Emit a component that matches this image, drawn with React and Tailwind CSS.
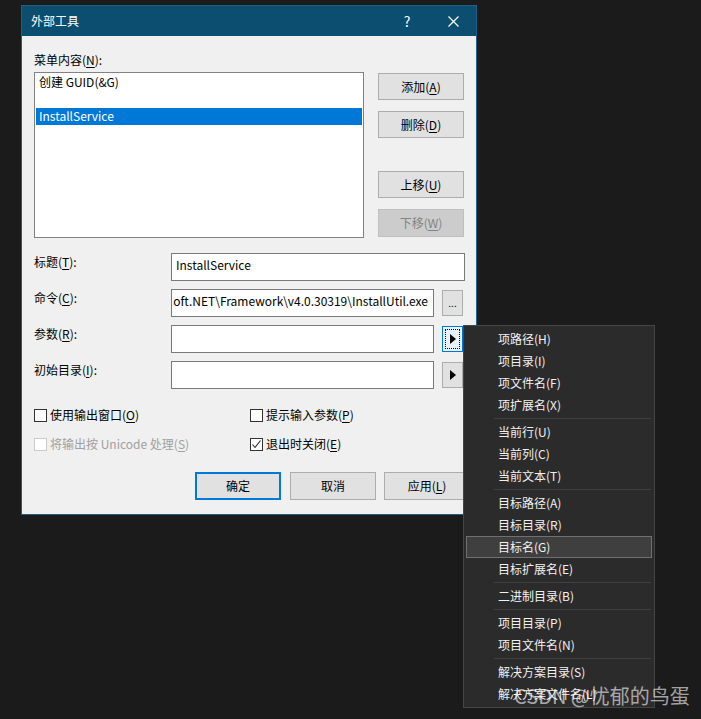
import React from "react";

const U = ({ children }) => <span className="underline underline-offset-[2px]">{children}</span>;

const Btn = ({ children, className = "" }) => (
  <div
    className={`flex items-center justify-center w-[86px] h-[27px] border border-[#adadad] bg-[#e1e1e1] text-[12px] leading-[16px] text-black ${className}`}
  >
    {children}
  </div>
);

const Arrow = () => (
  <svg width="6" height="10" viewBox="0 0 6 10">
    <path d="M0 0 L6 5 L0 10 Z" fill="#000" />
  </svg>
);

const Check = ({ checked, disabled, label }) => (
  <div className="flex items-center h-[16px]">
    <div
      className={`flex items-center justify-center w-[13px] h-[13px] border bg-white ${
        disabled ? "border-[#cccccc]" : "border-[#333333]"
      }`}
    >
      {checked && (
        <svg width="11" height="11" viewBox="0 0 11 11">
          <path d="M1.5 5.5 L4 8.5 L9.5 1.5" fill="none" stroke="#222" strokeWidth="1.1" />
        </svg>
      )}
    </div>
    <span className={`ml-[3px] text-[12px] leading-[16px] ${disabled ? "text-[#a0a0a0]" : "text-black"}`}>
      {label}
    </span>
  </div>
);

const FieldLabel = ({ children }) => (
  <div className="w-[137px] pt-[1px] text-[12px] leading-[16px] text-black">{children}</div>
);

const menuGroups = [
  ["项路径(H)", "项目录(I)", "项文件名(F)", "项扩展名(X)"],
  ["当前行(U)", "当前列(C)", "当前文本(T)"],
  ["目标路径(A)", "目标目录(R)", "目标名(G)", "目标扩展名(E)"],
  ["二进制目录(B)"],
  ["项目目录(P)", "项目文件名(N)"],
  ["解决方案目录(S)", "解决方案文件名(L)"],
];

export default function App() {
  return (
    <div className="relative w-[701px] h-[719px] overflow-hidden bg-[#1b1b1b] pt-[5px] pl-[21px] font-['Noto_Sans_CJK_SC',sans-serif]">
      {/* dialog */}
      <div className="w-[456px] h-[510px] border border-[#1e5f85] bg-[#f0f0f0] flex flex-col">
        {/* title bar */}
        <div className="flex items-center h-[30px] bg-[#0b4e70] text-white">
          <div className="flex-1 pl-[9px] text-[12px] leading-[16px]">外部工具</div>
          <div className="w-[46px] text-center text-[14px] leading-[16px]">?</div>
          <div className="w-[46px] flex items-center justify-center">
            <svg width="11" height="11" viewBox="0 0 11 11">
              <path d="M0.5 0.5 L10.5 10.5 M10.5 0.5 L0.5 10.5" stroke="#fff" strokeWidth="1.2" />
            </svg>
          </div>
        </div>

        {/* body */}
        <div className="pl-[12px] pt-[16px] flex flex-col">
          <div className="text-[12px] leading-[16px] text-black">
            菜单内容(<U>N</U>):
          </div>

          <div className="flex mt-[4px] gap-[14px]">
            <div className="w-[330px] h-[166px] border border-[#828282] bg-white p-[1px] text-[12px]">
              <div className="h-[17px] leading-[16px] pl-[3px] text-black">创建 GUID(&amp;G)</div>
              <div className="h-[17px]" />
              <div className="h-[17px] leading-[16px] pl-[3px] bg-[#0078d7] text-white">InstallService</div>
            </div>
            <div className="flex flex-col pt-[1px]">
              <Btn>
                添加(<U>A</U>)
              </Btn>
              <Btn className="mt-[11px]">
                删除(<U>D</U>)
              </Btn>
              <Btn className="mt-[33px]">
                上移(<U>U</U>)
              </Btn>
              <Btn className="mt-[11px] h-[28px] !bg-[#cccccc] !border-[#bfbfbf] !text-[#838383]">
                下移(<U>W</U>)
              </Btn>
            </div>
          </div>

          {/* fields */}
          <div className="flex flex-col gap-[8px] mt-[15px]">
            <div className="flex">
              <FieldLabel>
                标题(<U>T</U>):
              </FieldLabel>
              <div className="w-[294px] h-[28px] border border-[#7a7a7a] bg-white px-[4px] pt-[1px] text-[12px] leading-[20px] text-black">
                InstallService
              </div>
            </div>
            <div className="flex">
              <FieldLabel>
                命令(<U>C</U>):
              </FieldLabel>
              <div className="w-[263px] h-[28px] border border-[#7a7a7a] bg-white pr-[5px] pt-[1px] flex justify-end overflow-hidden whitespace-nowrap text-[12px] leading-[20px] text-black">
                oft.NET\Framework\v4.0.30319\InstallUtil.exe
              </div>
              <div className="ml-[8px] mt-[1px] w-[21px] h-[26px] border border-[#adadad] bg-[#e1e1e1] flex items-end justify-center pb-[7px] text-[10px] leading-[10px] text-black">
                ...
              </div>
            </div>
            <div className="flex">
              <FieldLabel>
                参数(<U>R</U>):
              </FieldLabel>
              <div className="w-[263px] h-[28px] border border-[#7a7a7a] bg-white" />
              <div className="ml-[8px] mt-[1px] w-[21px] h-[26px] border border-[#0078d7] bg-[#e5f1fb] p-[2px]">
                <div className="w-full h-full border border-dotted border-black flex items-center justify-center">
                  <Arrow />
                </div>
              </div>
            </div>
            <div className="flex">
              <FieldLabel>
                初始目录(<U>I</U>):
              </FieldLabel>
              <div className="w-[263px] h-[28px] border border-[#7a7a7a] bg-white" />
              <div className="ml-[8px] mt-[1px] w-[21px] h-[26px] border border-[#adadad] bg-[#e1e1e1] flex items-center justify-center">
                <Arrow />
              </div>
            </div>
          </div>

          {/* checkboxes */}
          <div className="grid grid-cols-[216px_1fr] gap-y-[13px] mt-[18px]">
            <Check label={<>使用输出窗口(<U>O</U>)</>} />
            <Check label={<>提示输入参数(<U>P</U>)</>} />
            <Check disabled label={<>将输出按 Unicode 处理(<U>S</U>)</>} />
            <Check checked label={<>退出时关闭(<U>E</U>)</>} />
          </div>

          {/* bottom buttons */}
          <div className="flex mt-[20px] ml-[161px]">
            <Btn className="h-[28px] !border-2 !border-[#0078d7] mr-[9px]">确定</Btn>
            <Btn className="h-[28px] mr-[8px]">取消</Btn>
            <Btn className="h-[28px]">
              应用(<U>L</U>)
            </Btn>
          </div>
        </div>
      </div>

      {/* context menu */}
      <div className="absolute left-[463px] top-[325px] w-[192px] h-[383px] border border-[#454545] bg-[#2b2b2b] pt-[2px] text-[12px] text-[#f1f1f1]">
        {menuGroups.map((group, gi) => (
          <div key={gi}>
            {gi > 0 && (
              <div className="h-[5px] flex items-center pl-[30px] pr-[3px]">
                <div className="w-full h-[1px] bg-[#404040]" />
              </div>
            )}
            {group.map((item) =>
              item === "目标名(G)" ? (
                <div
                  key={item}
                  className="mx-[2px] h-[22px] border border-[#707070] bg-[#3f3f3f] pl-[31px] leading-[20px]"
                >
                  {item}
                </div>
              ) : (
                <div key={item} className="h-[22px] pl-[34px] leading-[22px]">
                  {item}
                </div>
              )
            )}
          </div>
        ))}
      </div>

      {/* watermark */}
      <div className="absolute left-[514px] top-[683px] text-[20px] leading-[26px] text-white/60 whitespace-nowrap">
        CSDN @忧郁的鸟蛋
      </div>
    </div>
  );
}
